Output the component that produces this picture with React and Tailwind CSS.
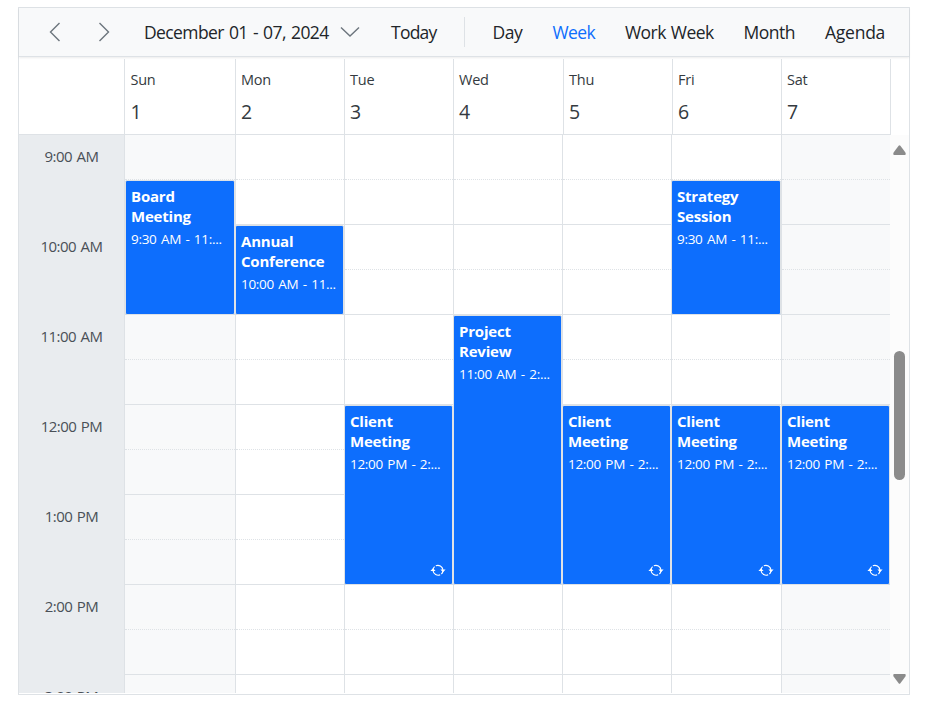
const hours = ["9:00 AM", "10:00 AM", "11:00 AM", "12:00 PM", "1:00 PM", "2:00 PM", "3:00 PM"];

const client = { title: ["Client", "Meeting"], time: "12:00 PM - 2:...", box: "top-[270px] h-[180px]", repeat: true };

const days = [
  {
    name: "Sun", date: 1, head: "w-[111px] pl-[5.5px]", col: "w-[111px] bg-[#f8f9fa] border-r",
    event: { title: ["Board", "Meeting"], time: "9:30 AM - 11:...", box: "top-[45px] h-[135px] left-0 w-[110px]" },
  },
  {
    name: "Mon", date: 2, head: "w-[109px] pl-[5px]", col: "w-[109px] border-r",
    event: { title: ["Annual", "Conference"], time: "10:00 AM - 11...", box: "top-[90px] h-[90px] -left-px w-[109px]" },
  },
  { name: "Tue", date: 3, head: "w-[109px] pl-[5px]", col: "w-[109px] border-r", event: { ...client, box: "top-[270px] h-[180px] -left-px w-[109px]" } },
  {
    name: "Wed", date: 4, head: "w-[110px] pl-[5px]", col: "w-[109px] border-r",
    event: { title: ["Project", "Review"], time: "11:00 AM - 2:...", box: "top-[180px] h-[270px] -left-px w-[109px]" },
  },
  { name: "Thu", date: 5, head: "w-[109px] pl-[5px]", col: "w-[109px] border-r", event: { ...client, box: "top-[270px] h-[180px] -left-px w-[109px]" } },
  {
    name: "Fri", date: 6, head: "w-[109px] pl-[5px]", col: "w-[110px] border-r",
    event: { title: ["Strategy", "Session"], time: "9:30 AM - 11:...", box: "top-[45px] h-[135px] -left-px w-[110px]" },
    second: { ...client, box: "top-[270px] h-[180px] -left-px w-[110px]" },
  },
  { name: "Sat", date: 7, head: "w-[109px] pl-[5px]", col: "w-[108px] bg-[#f8f9fa]", event: { ...client, box: "top-[270px] h-[180px] -left-px w-[109px]" } },
];

const slots = Array.from({ length: 13 }, (_, i) => i);

function RepeatIcon() {
  return (
    <svg className="absolute right-[6px] bottom-[6px]" width="16" height="15" viewBox="0 0 16 15" fill="none" stroke="#fff" strokeWidth="1.2">
      <path d="M3 6.9A5 5 0 0 1 4.6 3.6M5.8 2.8A5.1 5.1 0 0 1 12.9 6.9M13 7.7A5 5 0 0 1 11.4 11M10.2 11.8A5.1 5.1 0 0 1 3.1 7.7" />
      <path d="M.4 8L3 5.3L5.6 8ZM15.6 6.6L13 9.3L10.4 6.6Z" fill="#fff" stroke="none" />
    </svg>
  );
}

function Event({ event }) {
  return (
    <div className={`absolute overflow-hidden rounded-[2px] border border-[#dee2e6] bg-[#0d6efd] pl-[5px] pt-[5px] text-white ${event.box}`}>
      <div className="whitespace-nowrap text-[15px] font-bold leading-5 tracking-[-0.2px]">
        {event.title.map((line) => (
          <div key={line}>{line}</div>
        ))}
      </div>
      <div className="mt-[3px] whitespace-nowrap text-[13.5px] leading-[21px] tracking-[-0.3px] [word-spacing:1.2px]">{event.time}</div>
      {event.repeat && <RepeatIcon />}
    </div>
  );
}

export default function App() {
  return (
    <div className="h-[710px] w-[934px] bg-white pl-[18px] pt-[7px] font-['Open_Sans','Noto_Sans',sans-serif] text-[#212529]">
      <div className="flex h-[688px] w-[892px] flex-col border border-[#dee2e6] bg-white">
        <div className="relative z-10 flex h-[49px] shrink-0 items-center whitespace-nowrap border-b border-[#dee2e6] bg-[#f8f9fa] text-[17.5px] shadow-[0_1px_2px_rgba(0,0,0,0.08)]">
          <svg className="ml-[28.5px]" width="14" height="20" viewBox="0 0 14 20" fill="none" stroke="#6c757d" strokeWidth="1.4">
            <path d="M11.5 1L2.5 10L11.5 19" />
          </svg>
          <svg className="ml-[36.5px]" width="14" height="20" viewBox="0 0 14 20" fill="none" stroke="#6c757d" strokeWidth="1.4">
            <path d="M1.5 1L10.5 10L1.5 19" />
          </svg>
          <span className="ml-[32px] w-[196px] tracking-[-0.6px] [word-spacing:1.2px]">December 01 - 07, 2024</span>
          <svg width="20" height="12" viewBox="0 0 20 12" fill="none" stroke="#6c757d" strokeWidth="1.4">
            <path d="M1 1.5L10 10L19 1.5" />
          </svg>
          <span className="ml-[31px] w-[73px] tracking-[-0.75px]">Today</span>
          <span className="h-[30px] w-px bg-[#dee2e6]" />
          <span className="ml-[27.5px] w-[60px] tracking-[-0.4px]">Day</span>
          <span className="w-[72.5px] tracking-[-0.6px] text-[#0d6efd]">Week</span>
          <span className="w-[118.5px] tracking-[-0.55px] [word-spacing:1px]">Work Week</span>
          <span className="w-[81.5px] tracking-[-0.5px]">Month</span>
          <span className="tracking-[-0.25px]">Agenda</span>
        </div>

        <div className="flex h-[78px] w-[872px] shrink-0 border-b border-[#dee2e6] pt-[2px] text-[#343a40]">
          <div className="w-[106px] border-r border-[#dee2e6]" />
          {days.map((day) => (
            <div key={day.name} className={`border-r border-[#dee2e6] pt-[10px] ${day.head}`}>
              <div className="text-[14.5px] leading-[21px] tracking-[-0.25px]">{day.name}</div>
              <div className="mt-[7px] text-[19.5px] leading-[30px]">{day.date}</div>
            </div>
          ))}
        </div>

        <div className="flex h-[558px] shrink-0 overflow-hidden">
          <div className="w-[106px] shrink-0 border-r border-[#dee2e6] bg-[#e9ecef] text-[#495057]">
            {hours.map((hour) => (
              <div key={hour} className="h-[90px] pt-[10px] text-center text-[15px] leading-[22px] tracking-[-0.5px] [word-spacing:1px]">
                {hour}
              </div>
            ))}
          </div>
          {days.map((day) => (
            <div key={day.name} className={`relative h-[558px] shrink-0 border-[#dee2e6] ${day.col}`}>
              {slots.map((slot) => (
                <div key={slot} className={`h-[45px] border-b border-[#dee2e6] last:h-[18px] last:border-b-0 ${slot % 2 ? "" : "border-dotted"}`} />
              ))}
              <Event event={day.event} />
              {day.second && <Event event={day.second} />}
            </div>
          ))}
          <div className="flex w-[19px] shrink-0 flex-col items-center bg-[#fcfcfc]">
            <svg className="mt-[10px]" width="13" height="10" viewBox="0 0 13 10" fill="#8b8b8b">
              <path d="M5.6.8Q6.5-.2 7.4.8L12.4 7.6Q13.3 10 11.8 10H1.2Q-.3 10 .6 7.6Z" />
            </svg>
            <div className="mt-[196px] h-[129px] w-[11px] rounded-full bg-[#8b8b8b]" />
            <svg className="mt-[194px]" width="13" height="10" viewBox="0 0 13 10" fill="#8b8b8b">
              <path d="M5.6 9.2Q6.5 10.2 7.4 9.2L12.4 2.4Q13.3 0 11.8 0H1.2Q-.3 0 .6 2.4Z" />
            </svg>
          </div>
        </div>
      </div>
    </div>
  );
}
